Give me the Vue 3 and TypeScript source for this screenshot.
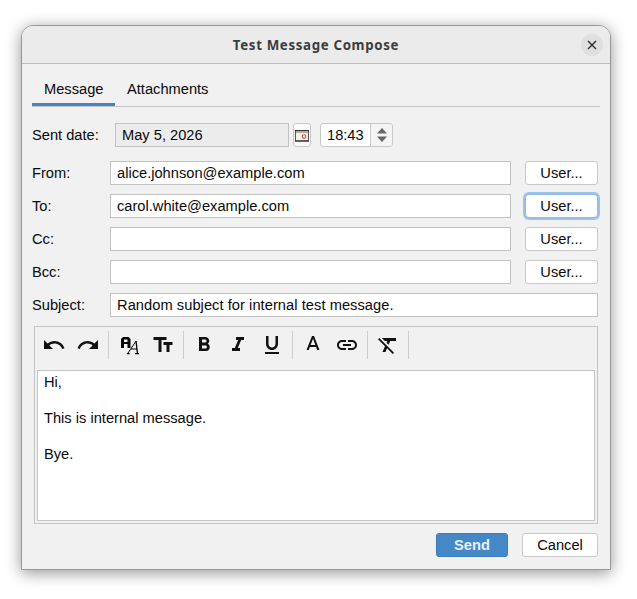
<template>
  <div class="page">
    <div class="dialog">
      <header class="titlebar">
        <span class="title">Test Message Compose</span>
        <button class="close-btn" aria-label="Close">
          <svg width="10" height="10" viewBox="0 0 10 10"><path d="M1 1l8 8M9 1l-8 8" stroke="#2e2e2e" stroke-width="1.4" fill="none" /></svg>
        </button>
      </header>

      <div class="body">
        <nav class="tabs">
          <a v-for="tab in tabs" :key="tab" class="tab" :class="{ active: tab === 'Message' }">{{ tab }}</a>
        </nav>

        <div class="date-row">
          <label class="date-label">Sent date:</label>
          <input class="field date-field" value="May 5, 2026" readonly />
          <button class="cal-btn" aria-label="Pick date">
            <svg width="14" height="13" viewBox="0 0 14 13">
              <rect x="0.5" y="1.5" width="13" height="10.5" fill="#f6f2ea" stroke="#555" />
              <path d="M0 1.5h14" stroke="#333" />
              <rect x="1" y="2" width="12" height="2" fill="#b9ad98" />
              <path d="M0 12h14" stroke="#333" stroke-width="1.2" />
              <circle cx="9" cy="7.6" r="1.8" fill="none" stroke="#e04a4a" stroke-width="1.1" />
            </svg>
          </button>
          <div class="time-box">
            <input class="time-input" value="18:43" />
            <div class="spin">
              <svg width="12" height="16" viewBox="0 0 12 16"><path d="M6 1l5 5.5H1z" fill="#666" /><path d="M6 15l5-5.5H1z" fill="#666" /></svg>
            </div>
          </div>
        </div>

        <div v-for="row in recipients" :key="row.label" class="row">
          <label>{{ row.label }}</label>
          <input class="field" :value="row.value" />
          <button class="btn user-btn" :class="{ focused: row.focused }">User...</button>
        </div>

        <div class="row">
          <label>Subject:</label>
          <input class="field subject" value="Random subject for internal test message." />
        </div>

        <div class="editor">
          <div class="toolbar">
            <template v-for="(group, i) in toolbar" :key="i">
              <button v-for="icon in group" :key="icon.name" class="tool" :aria-label="icon.name">
                <svg width="24" height="24" viewBox="0 0 24 24" v-html="icon.svg"></svg>
              </button>
              <span class="sep"></span>
            </template>
          </div>
          <div class="content">
            <p>Hi,</p>
            <p><br /></p>
            <p>This is internal message.</p>
            <p><br /></p>
            <p>Bye.</p>
          </div>
        </div>

        <footer class="actions">
          <button class="btn send">Send</button>
          <button class="btn cancel">Cancel</button>
        </footer>
      </div>
    </div>
  </div>
</template>

<script setup lang="ts">
interface Recipient {
  label: string
  value: string
  focused?: boolean
}

interface ToolIcon {
  name: string
  svg: string
}

const p = (d: string) => `<path d="${d}" fill="#111"/>`

const tabs = ['Message', 'Attachments']

const recipients: Recipient[] = [
  { label: 'From:', value: 'alice.johnson@example.com' },
  { label: 'To:', value: 'carol.white@example.com', focused: true },
  { label: 'Cc:', value: '' },
  { label: 'Bcc:', value: '' },
]

const toolbar: ToolIcon[][] = [
  [
    { name: 'Undo', svg: p('M12.5 8c-2.65 0-5.05.99-6.9 2.6L2 7v9h9l-3.62-3.62c1.39-1.16 3.16-1.88 5.12-1.88 3.54 0 6.55 2.31 7.6 5.5l2.37-.78C21.08 11.03 17.15 8 12.5 8z') },
    { name: 'Redo', svg: p('M18.4 10.6C16.55 8.99 14.15 8 11.5 8c-4.65 0-8.58 3.03-9.96 7.22L3.9 16c1.05-3.19 4.05-5.5 7.6-5.5 1.95 0 3.73.72 5.12 1.88L13 16h9V7l-3.6 3.6z') },
  ],
  [
    {
      name: 'Font family',
      svg:
        '<path fill-rule="evenodd" d="M4 15V6l2-2h5.5l2 2v9h-3v-4H7v4zM7 9h3.5V6.4H7z" fill="#000"/>' +
        '<path d="M10.6 20.6l8.4-12.4M14 16h6" fill="none" stroke="#000" stroke-width="1"/>' +
        '<path d="M19 8l1.5 12.6M18.2 20.7h3.8M9.8 20.7h2.8" fill="none" stroke="#000" stroke-width="1.3"/>',
    },
    { name: 'Font size', svg: p('M2.5 4v3h5v12h3V7h5V4h-13zm19 5h-9v3h3v7h3v-7h3V9z') },
  ],
  [
    { name: 'Bold', svg: p('M15.6 10.79c.97-.67 1.65-1.77 1.65-2.79 0-2.26-1.75-4-4-4H7v14h7.04c2.09 0 3.71-1.7 3.71-3.79 0-1.52-.86-2.82-2.15-3.42zM10 6.5h3c.83 0 1.5.67 1.5 1.5s-.67 1.5-1.5 1.5h-3v-3zm3.5 9H10v-3h3.5c.83 0 1.5.67 1.5 1.5s-.67 1.5-1.5 1.5z') },
    { name: 'Italic', svg: p('M10 4v3h2.21l-3.42 8H6v3h8v-3h-2.21l3.42-8H18V4z') },
    { name: 'Underline', svg: p('M12 17c3.31 0 6-2.69 6-6V3h-2.5v8c0 1.93-1.57 3.5-3.5 3.5S8.5 12.93 8.5 11V3H6v8c0 3.31 2.69 6 6 6zm-7 2v2h14v-2H5z') },
  ],
  [
    { name: 'Text color', svg: p('M11 3L5.5 17h2.25l1.12-3h6.25l1.12 3h2.25L13 3h-2zm-1.38 9L12 5.67 14.38 12H9.62z') },
    { name: 'Link', svg: p('M3.9 12c0-1.71 1.39-3.1 3.1-3.1h4V7H7c-2.76 0-5 2.24-5 5s2.24 5 5 5h4v-1.9H7c-1.71 0-3.1-1.39-3.1-3.1zM8 13h8v-2H8v2zm9-6h-4v1.9h4c1.71 0 3.1 1.39 3.1 3.1s-1.39 3.1-3.1 3.1h-4V17h4c2.76 0 5-2.24 5-5s-2.24-5-5-5z') },
  ],
  [
    { name: 'Clear format', svg: p('M3.27 5L2 6.27l6.97 6.97L6.5 19h3l1.57-3.66L16.73 21 18 19.73 3.55 5.27 3.27 5zM6 5v.18L8.82 8h2.4l-.72 1.68 2.1 2.1L14.21 8H20V5H6z') },
  ],
]
</script>

<style>
html,
body {
  background: #fff;
}
</style>

<style scoped>
.page {
  padding: 25px 26px 29px 21px;
  width: 590px;
  font-family: 'Liberation Sans', Arial, sans-serif;
  font-size: 14.67px;
  color: #0a0a0a;
}

.dialog {
  height: 545px;
  box-sizing: border-box;
  display: flex;
  flex-direction: column;
  background: #f1f1f1;
  border: 1px solid #989898;
  border-radius: 12px 12px 0 0;
  box-shadow: 0 3px 16px rgba(0, 0, 0, 0.42);
}

.titlebar {
  position: relative;
  flex: 0 0 37px;
  display: flex;
  align-items: center;
  justify-content: center;
  background: #ebebeb;
  border-bottom: 1px solid #bcbcbc;
  border-radius: 11px 11px 0 0;
}

.title {
  font-family: 'Noto Sans', sans-serif;
  font-weight: 700;
  font-size: 13.3px;
  letter-spacing: 0.65px;
  color: #3d3d3d;
}

.close-btn {
  position: absolute;
  right: 7px;
  top: 8px;
  width: 22px;
  height: 22px;
  padding: 0;
  border: none;
  border-radius: 50%;
  background: #dfdfdf;
  display: flex;
  align-items: center;
  justify-content: center;
}

.body {
  flex: 1;
  display: flex;
  flex-direction: column;
  padding: 12px 12px 12px 10px;
}

.tabs {
  display: flex;
  height: 30px;
  margin-right: -2px;
  border-bottom: 1px solid #c4c4c4;
  margin-bottom: 16px;
}

.tab {
  padding: 0 12px;
  line-height: 26px;
  height: 30px;
  box-sizing: border-box;
}

.tab + .tab {
  padding-left: 11.5px;
}

.tab.active {
  border-bottom: 3px solid #4284c4;
}

.date-row {
  display: flex;
  align-items: center;
  height: 24px;
  margin-bottom: 14px;
}

.date-label {
  width: 83px;
}

.field {
  flex: 1;
  min-width: 0;
  height: 24px;
  box-sizing: border-box;
  padding: 0 6px;
  border: 1px solid #c2c2c2;
  background: #fff;
  font: inherit;
  color: inherit;
  outline: none;
}

.subject {
  letter-spacing: 0.05px;
}

.date-field {
  flex: 0 0 174px;
  background: #ececec;
}

.cal-btn {
  width: 18px;
  height: 24px;
  margin-left: 4px;
  padding: 0;
  border: 1px solid #c8c8c8;
  border-radius: 3px;
  background: #fbfbfb;
  display: flex;
  align-items: center;
  justify-content: center;
}

.time-box {
  display: flex;
  width: 73px;
  height: 24px;
  box-sizing: border-box;
  margin-left: 9px;
  border: 1px solid #c8c8c8;
  border-radius: 3px;
  background: #fff;
}

.time-input {
  width: 50px;
  box-sizing: border-box;
  padding: 0 0 0 6px;
  border: none;
  border-right: 1px solid #c8c8c8;
  border-radius: 3px 0 0 3px;
  background: transparent;
  font: inherit;
  color: inherit;
  outline: none;
}

.spin {
  flex: 1;
  display: flex;
  align-items: center;
  justify-content: center;
  background: #f4f4f4;
  border-radius: 0 3px 3px 0;
}

.row {
  display: flex;
  align-items: center;
  height: 24px;
  margin-bottom: 9px;
}

.row label {
  width: 78px;
}

.btn {
  height: 24px;
  box-sizing: border-box;
  padding: 0;
  border: 1px solid #c8c8c8;
  border-radius: 3px;
  background: #fff;
  font: inherit;
  color: inherit;
}

.user-btn {
  flex: 0 0 73px;
  margin-left: 14px;
}

.user-btn.focused {
  border-color: #8fb9e6;
  box-shadow: 0 0 0 2px #9cc2ea;
  border-radius: 4px;
}

.editor {
  height: 198px;
  box-sizing: border-box;
  margin-left: 2px;
  border: 1px solid #c4c4c4;
  display: flex;
  flex-direction: column;
}

.toolbar {
  flex: 0 0 43px;
  box-sizing: border-box;
  display: flex;
  align-items: flex-start;
  padding: 4px 0 0 2px;
}

.tool {
  width: 34px;
  height: 28px;
  padding: 0;
  border: none;
  background: none;
  display: flex;
  align-items: center;
  justify-content: center;
}

.sep {
  width: 1px;
  height: 28px;
  margin: 0 3px;
  background: #cbcbcb;
}

.content {
  flex: 1;
  margin: 0 2px 2px 2px;
  padding: 2px 6px 0 6px;
  border: 1px solid #c4c4c4;
  background: #fff;
  line-height: 18px;
}

.content p {
  margin: 0;
}

.actions {
  display: flex;
  justify-content: flex-end;
  gap: 14px;
  margin-top: 9px;
}

.send {
  width: 72px;
  background: #4488c8;
  border-color: #3d7cb8;
  color: #e8f1fa;
  font-weight: 700;
}

.cancel {
  width: 76px;
}
</style>
